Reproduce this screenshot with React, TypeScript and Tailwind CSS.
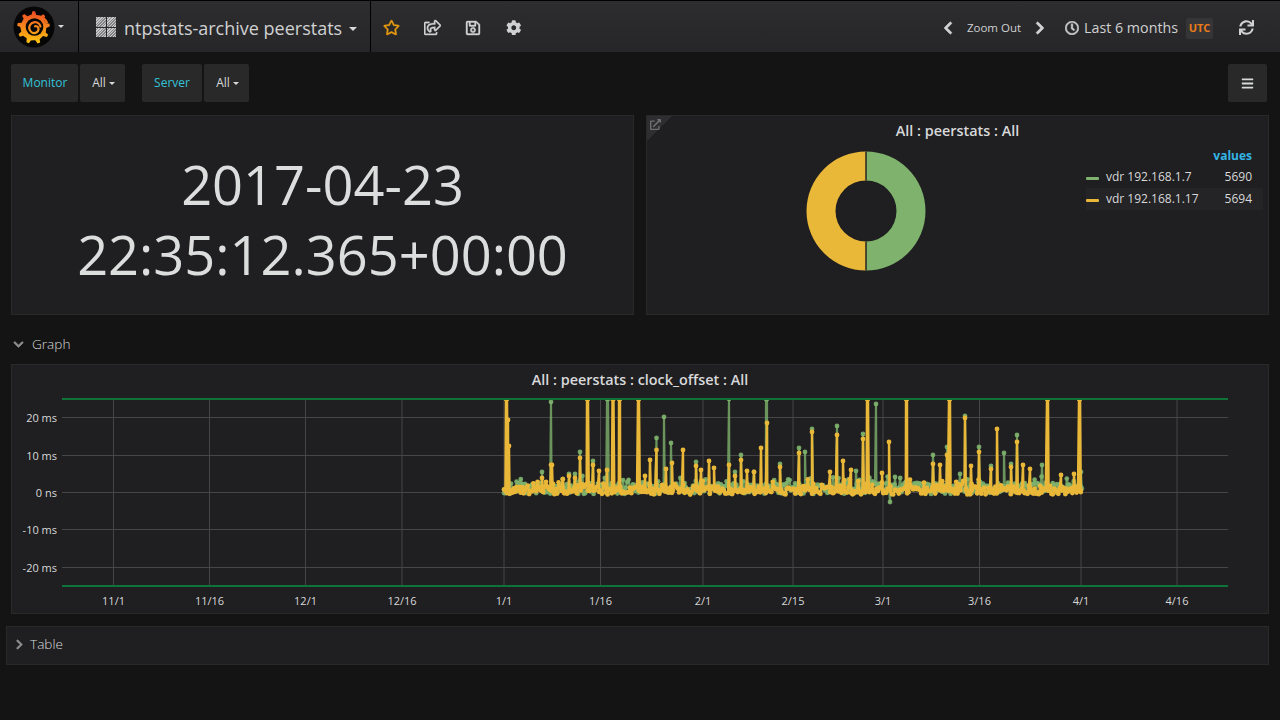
import React from "react";
import { FaRegStar, FaRegShareSquare, FaRegSave, FaCog, FaChevronLeft, FaChevronRight, FaChevronDown, FaRegClock, FaBars, FaExternalLinkAlt, FaSync } from "react-icons/fa";

function rng(seed: number) {
  let s = seed;
  return () => {
    s = (s * 1664525 + 1013904223) % 4294967296;
    return s / 4294967296;
  };
}

type Spike = [number, number];
const yellowSpikes: Spike[] = [
  [506, 399], [507, 399], [508, 420], [509, 446], [551, 465], [552, 465], [587, 399], [588, 399], [612.5, 399], [613.5, 399], [619, 399], [620, 399], [638, 399], [639, 399],
  [580, 458], [593, 465], [599, 471], [607, 470], [650, 460], [656.5, 450], [666, 469], [672, 463], [683, 450], [696, 466], [701, 470], [709, 461], [714, 468], [729, 465], [735, 476], [741, 460], [747, 471], [754, 472], [761, 448], [767, 423], [780, 467],
  [799, 453], [812, 432], [837, 435], [843, 461], [851, 470], [830, 472], [863, 439], [867, 399], [868, 399], [882, 473], [889, 442], [906, 399], [907, 399], [933, 464], [940, 465], [947, 455], [949, 399], [950, 399], [965, 418], [971, 466], [979, 452], [991, 469], [997, 429], [1011, 467], [1017, 442], [1023, 465], [1030, 469], [1047, 399], [1048, 399], [1061, 475], [1074, 474], [1079, 399], [1080, 399],
  [645, 476], [569, 476], [542, 478], [575, 478],
];
const greenSpikes: Spike[] = [
  [551, 402], [607, 399], [608, 399], [664, 417], [656.5, 438], [671, 443], [580, 452], [593, 461], [729, 399], [766, 399], [767, 399], [741, 455], [696, 462], [780, 464], [735, 472], [754, 472], [542, 472], [569, 474], [575, 474],
  [799, 448], [805, 452], [812, 429], [837, 426], [856, 471], [863, 434], [876, 404], [933, 455], [947, 447], [965, 416], [979, 447], [991, 466], [1004, 453], [1011, 464], [1017, 435], [1042, 465], [895, 477], [960, 474], [890, 502], [1081, 472],
];

function series(seed: number, spikes: Spike[], base: number, amp: number) {
  const r = rng(seed);
  const pts: [number, number][] = [];
  for (let x = 504; x <= 1081; x += 1.4) {
    const v = r();
    const y = base + (r() - 0.5) * amp + (v > 0.8 ? -3 - r() * 5 : 0);
    pts.push([x, y]);
  }
  const all = pts.concat(spikes.flatMap(([x, y]): [number, number][] => [[x, y], [x + 0.8, base]]));
  all.sort((a, b) => a[0] - b[0]);
  return all;
}

const green = series(7, greenSpikes, 488.5, 11);
const yellow = series(23, yellowSpikes, 490.5, 8);
const toPath = (p: [number, number][]) => p.map(([x, y], i) => `${i ? "L" : "M"}${x.toFixed(1)} ${y.toFixed(1)}`).join("");

function Chart() {
  const vx = [113.5, 209.5, 305.5, 402, 504, 600.5, 703, 793, 883, 979.5, 1081, 1177];
  const xl = ["11/1", "11/16", "12/1", "12/16", "1/1", "1/16", "2/1", "2/15", "3/1", "3/16", "4/1", "4/16"];
  const hy: [number, string][] = [[417.5, "20 ms"], [455.5, "10 ms"], [492.5, "0 ns"], [529.5, "-10 ms"], [567.5, "-20 ms"]];
  return (
    <svg width="1256" height="233" viewBox="12 380 1256 233" className="block" style={{ fontFamily: "'Open Sans', sans-serif" }}>
      <defs>
        <clipPath id="plot"><rect x="62" y="399" width="1166" height="187" /></clipPath>
      </defs>
      {hy.map(([y, t]) => (
        <g key={t}>
          <line x1="62" x2="1228" y1={y} y2={y} stroke="#464646" />
          <text x="57" y={y + 4} textAnchor="end" fontSize="11" fill="#d8d9da">{t}</text>
        </g>
      ))}
      {vx.map((x, i) => (
        <g key={x}>
          <line x1={x} x2={x} y1="399" y2="586" stroke="#464646" />
          <text x={x} y="605" textAnchor="middle" fontSize="11" fill="#d8d9da">{xl[i]}</text>
        </g>
      ))}
      <g clipPath="url(#plot)">
        <path d={toPath(green)} fill="none" stroke="#7eb26d" strokeWidth="2.2" strokeOpacity="0.8" strokeLinejoin="round" />
        {green.map(([x, y], i) => <circle key={i} cx={x} cy={y} r="2.4" fill="#7eb26d" fillOpacity="0.9" />)}
        <path d={toPath(yellow)} fill="none" stroke="#eab839" strokeWidth="2.4" strokeLinejoin="round" />
        {yellow.map(([x, y], i) => <circle key={i} cx={x} cy={y} r="2.4" fill="#eab839" />)}
      </g>
      <line x1="62" x2="1228" y1="399" y2="399" stroke="#0f7238" strokeWidth="2" />
      <line x1="62" x2="1228" y1="586" y2="586" stroke="#0f7238" strokeWidth="2" />
    </svg>
  );
}

function gearPath() {
  const teeth = 9, cx = 20.5, cy = 21.5;
  const parts: string[] = [];
  for (let i = 0; i < teeth; i++) {
    const a = (i / teeth) * Math.PI * 2 - Math.PI / 2;
    const st = (Math.PI * 2) / teeth;
    const p = [[12.8, -0.5], [13.2, -0.2], [16.4, -0.1], [16.4, 0.14], [12.8, 0.3]];
    p.forEach(([r, f]) => {
      const t = a + f * st;
      parts.push(`${parts.length ? "L" : "M"}${(cx + r * Math.cos(t)).toFixed(2)} ${(cy + r * Math.sin(t)).toFixed(2)}`);
    });
  }
  return parts.join("") + "Z";
}

function Logo() {
  return (
    <svg width="42" height="42" viewBox="0 0 42 42">
      <defs>
        <linearGradient id="lg2" gradientUnits="userSpaceOnUse" x1="0" y1="5" x2="0" y2="38">
          <stop offset="0" stopColor="#ee4a26" />
          <stop offset="1" stopColor="#fcc70f" />
        </linearGradient>
      </defs>
      <circle cx="21" cy="21" r="20.5" fill="#060606" />
      <path d={gearPath()} fill="url(#lg2)" />
      <circle cx="21.5" cy="21" r="8.8" fill="#060606" />
      <path d="M34 17.500C33 12.500 27 9.500 21.500 10.800" fill="none" stroke="url(#lg2)" strokeWidth="2.400" />
      <path d="M27.500 20.500c-.8-3.200-3.800-4.800-6.800-4.200-3.200.7-5 3.800-4.300 6.800.7 2.800 3.400 4.400 6 3.800 2.200-.5 3.500-2.600 3-4.600-.4-1.500-1.900-2.500-3.400-2.100" fill="none" stroke="url(#lg2)" strokeWidth="2.200" strokeLinecap="round" />
    </svg>
  );
}

function GridIcon() {
  const hatch = "h-[9.500px] bg-[repeating-linear-gradient(135deg,#c9c9ca_0px,#c9c9ca_1px,#848486_1px,#848486_2px)]";
  return (
    <div className="grid grid-cols-[9.500px_9.500px] gap-[1px] mr-[8px] mt-[1px]">
      <div className={hatch} />
      <div className={hatch} />
      <div className={hatch} />
      <div className={hatch} />
    </div>
  );
}

const Caret = () => <span className="inline-block w-0 h-0 border-x-[3px] border-x-transparent border-t-[3px] border-t-[#d8d9da]" />;

function Nav() {
  return (
    <div className="flex h-[52px] items-stretch border-t border-black bg-[linear-gradient(#2d2d2f,#262628)] text-[#d0d1d2]">
      <div className="flex w-[79px] items-center border-r border-black pl-[13px]">
        <Logo />
        <span className="ml-[3px] inline-block w-0 h-0 border-x-[3px] border-x-transparent border-t-[3px] border-t-[#d8d9da]" />
      </div>
      <div className="flex w-[292px] items-center border-r border-black pl-[17px] text-[18px]">
        <GridIcon />
        <span className="mt-[3px]">ntpstats-archive peerstats</span>
        <span className="ml-[7px] mt-[5px] inline-block w-0 h-0 border-x-[4px] border-x-transparent border-t-[4px] border-t-[#d8d9da]" />
      </div>
      <div className="flex items-center pl-[12px] pt-[2px] text-[16px]">
        <FaRegStar className="text-[#e69a0f] text-[17px]" stroke="currentColor" strokeWidth={12} />
        <FaRegShareSquare className="ml-[24px] text-[17px]" stroke="currentColor" strokeWidth={12} />
        <FaRegSave className="ml-[24px] text-[16px]" stroke="currentColor" strokeWidth={12} />
        <FaCog className="ml-[25px] text-[15.500px]" />
      </div>
      <div className="ml-auto flex items-center pr-[26px] pt-[2px]">
        <FaChevronLeft className="-ml-[2px] text-[14px]" stroke="currentColor" strokeWidth={30} />
        <span className="ml-[12px] text-[11.500px]">Zoom Out</span>
        <FaChevronRight className="ml-[12px] text-[14px]" stroke="currentColor" strokeWidth={30} />
        <FaRegClock className="ml-[18px] text-[14px]" stroke="currentColor" strokeWidth={20} />
        <span className="ml-[5px] mt-[1px] text-[14.250px]">Last 6 months</span>
        <span className="ml-[8px] mt-[1px] flex h-[21px] w-[27px] items-center justify-center rounded-[2px] bg-[#353537] text-[11px] font-bold text-[#eb7b18]">UTC</span>
        <FaSync className="ml-[26px] text-[15px]" />
      </div>
    </div>
  );
}

function Box({ className, children }: { className: string; children: React.ReactNode }) {
  return <div className={`flex h-[38px] items-center justify-center rounded-[2px] bg-[#292929] text-[12px] ${className}`}>{children}</div>;
}

function Sub() {
  return (
    <div className="flex h-[38px] mt-[12px] mx-[11px] items-center text-[#d8d9da]">
      <Box className="w-[67px] pl-[1px] text-[#33c3d9]">Monitor</Box>
      <Box className="ml-[2px] w-[45px] gap-[3px] pl-[2px]">All <Caret /></Box>
      <Box className="ml-[17px] w-[60px] text-[#33c3d9]">Server</Box>
      <Box className="ml-[2px] w-[45px] gap-[3px] pl-[2px]">All <Caret /></Box>
      <Box className="ml-auto mr-[2px] w-[39px]"><FaBars className="text-[13px]" /></Box>
    </div>
  );
}

function Panel({ className, children }: { className: string; children: React.ReactNode }) {
  return <div className={`border border-[#292929] bg-[#1f1e20] ${className}`}>{children}</div>;
}

function Donut() {
  const cx = 866, cy = 210.5, r = 59.5, ri = 30.5;
  return (
    <svg width="120" height="120" viewBox="806 150.500 120 120" className="block">
      <path d={`M${cx} ${cy - r}A${r} ${r} 0 0 1 ${cx} ${cy + r}L${cx} ${cy + ri}A${ri} ${ri} 0 0 0 ${cx} ${cy - ri}Z`} fill="#7eb26d" />
      <path d={`M${cx} ${cy - r}A${r} ${r} 0 0 0 ${cx} ${cy + r}L${cx} ${cy + ri}A${ri} ${ri} 0 0 1 ${cx} ${cy - ri}Z`} fill="#eab839" />
      <line x1={cx} x2={cx} y1={cy - r} y2={cy - ri} stroke="#2a2620" strokeWidth="1.5" />
      <line x1={cx} x2={cx} y1={cy + ri} y2={cy + r} stroke="#2a2620" strokeWidth="1.5" />
    </svg>
  );
}

export default function App() {
  return (
    <div className="h-[720px] w-[1280px] overflow-hidden bg-[#141414] text-[#d8d9da]" style={{ fontFamily: "'Open Sans', sans-serif" }}>
      <Nav />
      <Sub />
      <div className="mt-[13px] mx-[11px] flex gap-[12px]">
        <Panel className="flex h-[200px] w-[623px] items-center justify-center pt-[8px]">
          <div className="text-center text-[54.200px] leading-[70px] text-[#dcdddd]">2017-04-23<br />22:35:12.365+00:00</div>
        </Panel>
        <Panel className="relative flex h-[200px] w-[623px] flex-col">
          <div className="absolute left-0 top-0 h-0 w-0 border-r-[25px] border-t-[25px] border-r-transparent border-t-[#2e2e30]" />
          <FaExternalLinkAlt className="absolute left-[3px] top-[3px] text-[11px] text-[#6e6e70]" />
          <div className="h-[30px] pt-[4px] text-center text-[14.400px] font-semibold leading-[21px]">All : peerstats : All</div>
          <div className="flex">
            <div className="ml-[159px] mt-[5px]"><Donut /></div>
            <div className="ml-[160px] mt-[0px] w-[177px] text-[12px]">
              <div className="h-[20px] pr-[11px] text-right font-bold leading-[20px] text-[#33b5e5]">values</div>
              <div className="flex h-[22px] items-center pr-[11px]">
                <span className="mt-[3px] h-[3px] w-[13px] rounded-[1px] bg-[#7eb26d]" />
                <span className="ml-[7px]">vdr 192.168.1.7</span>
                <span className="ml-auto">5690</span>
              </div>
              <div className="flex h-[22px] items-center bg-[#242325] pr-[11px]">
                <span className="mt-[3px] h-[3px] w-[13px] rounded-[1px] bg-[#eab839]" />
                <span className="ml-[7px]">vdr 192.168.1.17</span>
                <span className="ml-auto">5694</span>
              </div>
            </div>
          </div>
        </Panel>
      </div>
      <div className="mt-[18px] ml-[13px] flex h-[22px] items-center text-[13.600px] font-light">
        <FaChevronDown className="text-[11px] text-[#8e8e8e]" stroke="currentColor" strokeWidth={30} />
        <span className="ml-[8px]">Graph</span>
      </div>
      <Panel className="mx-[11px] mt-[9px] h-[250px]">
        <div className="h-[30px] pt-[4px] text-center text-[14.400px] font-semibold leading-[21px]">All : peerstats : clock_offset : All</div>
        <div className="-mt-[15px]"><Chart /></div>
      </Panel>
      <Panel className="ml-[6px] mr-[11px] mt-[12px] flex h-[39px] items-center pb-[2px] pl-[7px] text-[13.600px] font-light">
        <FaChevronRight className="text-[11px] text-[#8e8e8e]" stroke="currentColor" strokeWidth={30} />
        <span className="ml-[5px]">Table</span>
      </Panel>
    </div>
  );
}
